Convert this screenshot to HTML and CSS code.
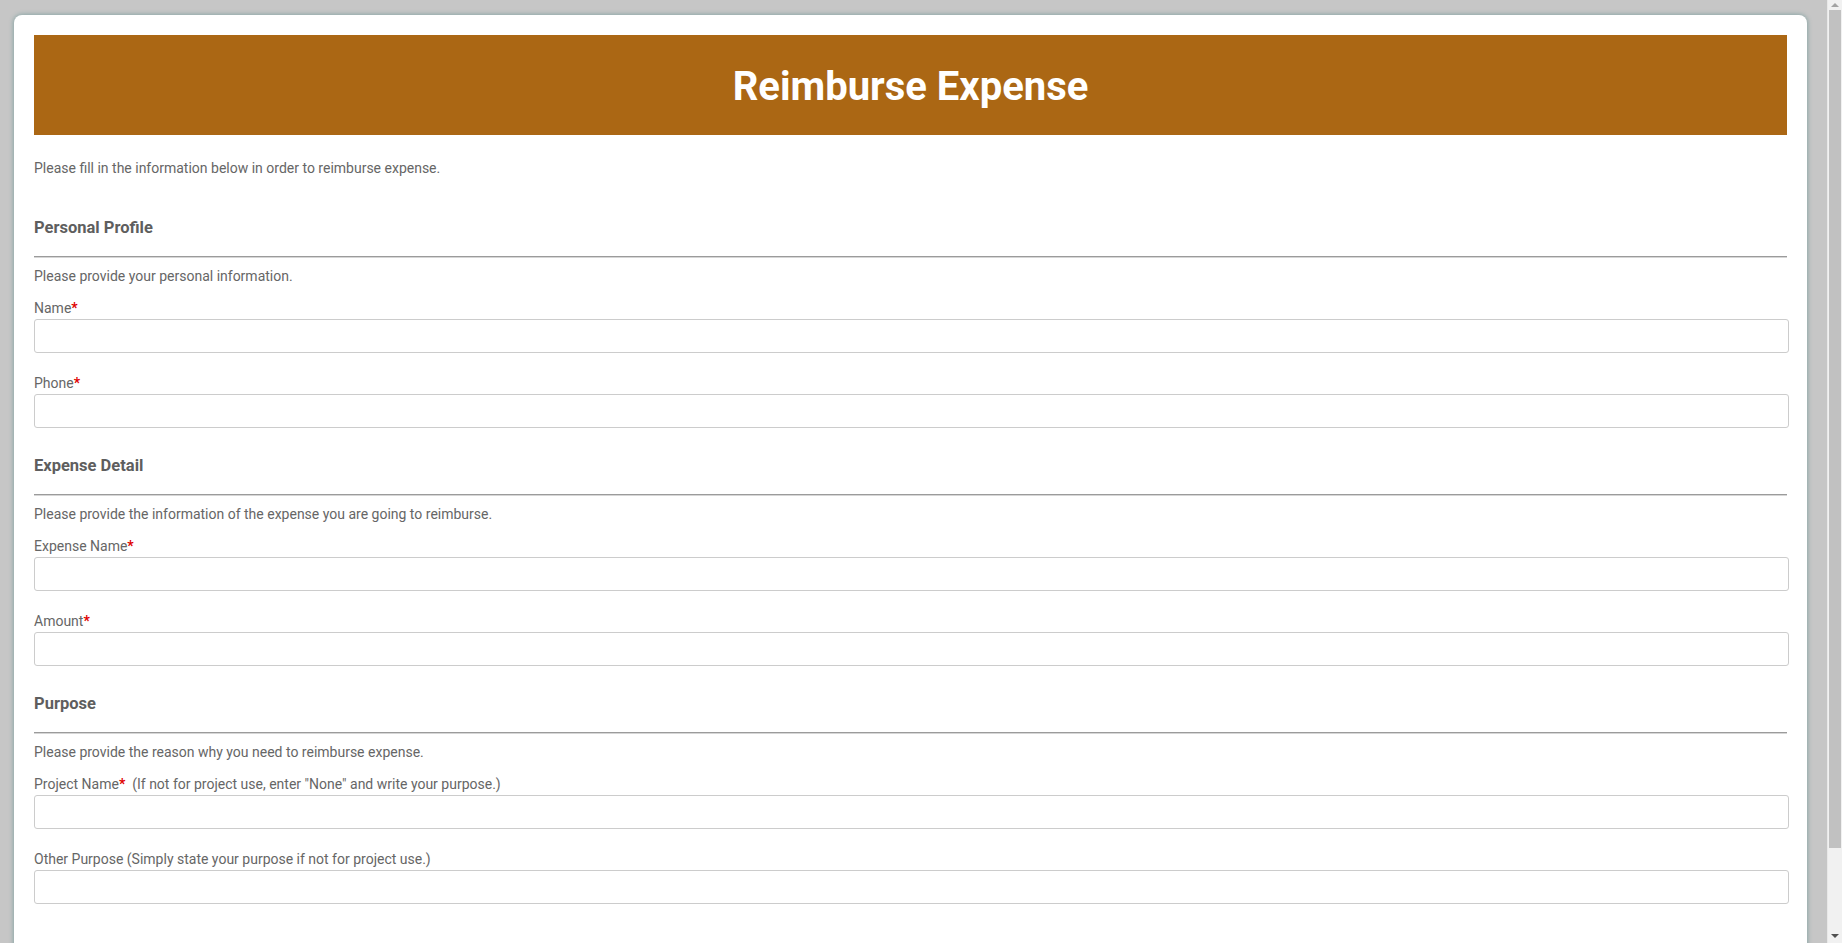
FILE: index.html
```html
<!DOCTYPE html>
<html lang="en">
<head>
<meta charset="utf-8">
<title>Reimburse Expense</title>
<link rel="stylesheet" href="styles.css">
</head>
<body>
<div class="card">
  <div class="banner"><h1 class="title">Reimburse Expense</h1></div>
  <p class="intro">Please fill in the information below in order to reimburse expense.</p>

  <div class="section">
    <h3 class="section-title">Personal Profile</h3>
    <div class="rule"></div>
    <p class="section-desc">Please provide your personal information.</p>
    <div class="field">
      <label class="label">Name<span class="req">*</span></label>
      <input class="input" type="text">
    </div>
    <div class="field">
      <label class="label">Phone<span class="req">*</span></label>
      <input class="input" type="text">
    </div>
  </div>

  <div class="section">
    <h3 class="section-title">Expense Detail</h3>
    <div class="rule"></div>
    <p class="section-desc">Please provide the information of the expense you are going to reimburse.</p>
    <div class="field">
      <label class="label">Expense Name<span class="req">*</span></label>
      <input class="input" type="text">
    </div>
    <div class="field">
      <label class="label">Amount<span class="req">*</span></label>
      <input class="input" type="text">
    </div>
  </div>

  <div class="section">
    <h3 class="section-title">Purpose</h3>
    <div class="rule"></div>
    <p class="section-desc">Please provide the reason why you need to reimburse expense.</p>
    <div class="field">
      <label class="label">Project Name<span class="req">*</span>&nbsp; (If not for project use, enter "None" and write your purpose.)</label>
      <input class="input" type="text">
    </div>
    <div class="field">
      <label class="label">Other Purpose (Simply state your purpose if not for project use.)</label>
      <input class="input" type="text">
    </div>
  </div>
</div>

<div class="scrollbar" aria-hidden="true">
  <div class="sb-btn"><span class="sb-arrow-up"></span></div>
  <div class="sb-thumb"></div>
  <div class="sb-space"></div>
  <div class="sb-btn sb-btn-down"><span class="sb-arrow-down"></span></div>
</div>
</body>
</html>
```

FILE: styles.css
```css
html, body {
  margin: 0;
  padding: 0;
}
body {
  background: #c6c6c6;
  font-family: Roboto, "Liberation Sans", Arial, sans-serif;
  color: #666;
  font-size: 14px;
}
.card {
  margin: 15px 35px 20px 14px;
  background: #fff;
  border-radius: 8px;
  box-shadow: 0 0 4px 1px #8ea8a8;
  padding: 20px 20px 105px 20px;
}
.banner {
  height: 100px;
  background: #ab6714;
  display: flex;
  align-items: center;
  justify-content: center;
}
.title {
  margin: 0;
  padding-top: 3px;
  color: #fff;
  font-size: 40px;
  font-weight: 700;
  line-height: 1;
}
.intro {
  margin: 23px 0 0 0;
  line-height: 20px;
}
.section-title {
  margin: 40px 0 0 0;
  font-size: 16.5px;
  font-weight: 700;
  color: #5e5e5e;
  line-height: 20px;
}
.section + .section .section-title {
  margin-top: 28px;
}
.rule {
  margin-top: 18px;
  border-top: 1px solid #9b9b9b;
  border-bottom: 1px solid #d6d6d6;
}
.section-desc {
  margin: 8px 0 0 0;
  line-height: 20px;
}
.field {
  margin-top: 11px;
}
.field + .field {
  margin-top: 19px;
}
.label {
  display: block;
  line-height: 22px;
}
.req {
  color: #e00000;
  font-weight: 700;
}
.input {
  display: block;
  box-sizing: content-box;
  width: 100%;
  height: 32px;
  margin: 0;
  padding: 0;
  border: 1px solid #cccccc;
  border-radius: 3px;
  background: #fff;
  font-family: inherit;
}

/* painted vertical scrollbar */
.scrollbar {
  position: fixed;
  top: 0;
  right: 0;
  bottom: 0;
  width: 14px;
  background: #f1f1f1;
  border-left: 1px solid #e8e8e8;
  display: flex;
  flex-direction: column;
}
.sb-btn {
  height: 10px;
  display: flex;
  justify-content: center;
  align-items: center;
}
.sb-btn-down {
  height: 15px;
}
.sb-arrow-up {
  width: 0;
  height: 0;
  border-left: 4px solid transparent;
  border-right: 4px solid transparent;
  border-bottom: 4px solid #a3a3a3;
}
.sb-arrow-down {
  width: 0;
  height: 0;
  border-left: 4px solid transparent;
  border-right: 4px solid transparent;
  border-top: 4px solid #505050;
}
.sb-thumb {
  height: 838px;
  margin: 0 1px 0 1px;
  background: #c1c1c1;
}
.sb-space {
  flex: 1;
}
```
